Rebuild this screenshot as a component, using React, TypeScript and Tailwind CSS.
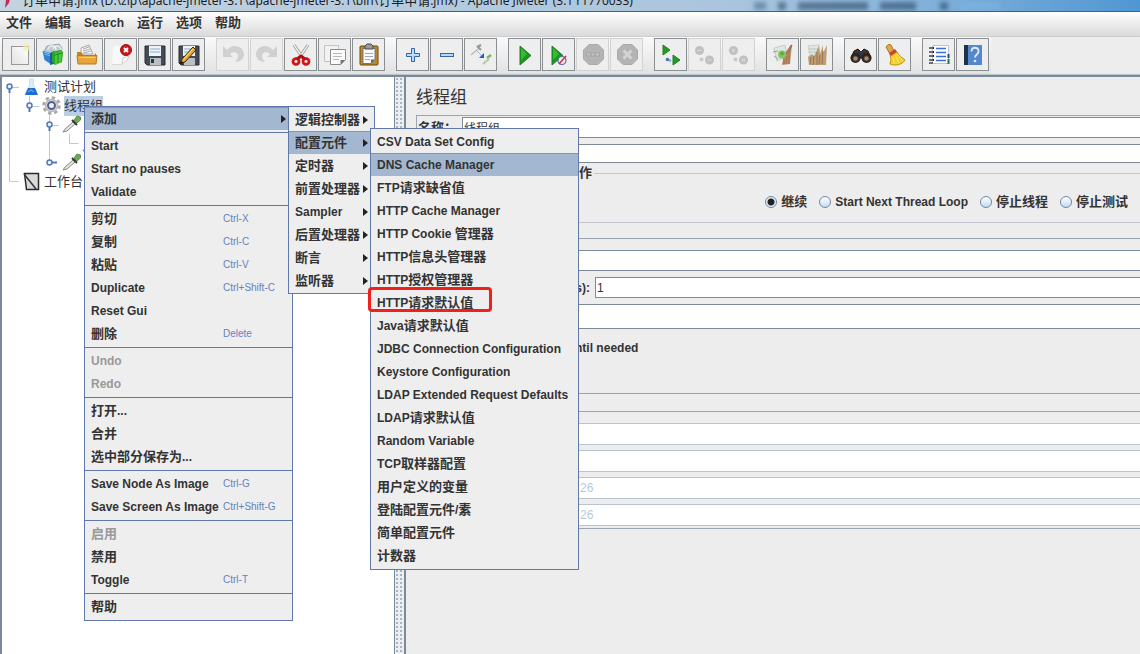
import { useState } from 'react';
import type { ReactNode } from 'react';

type Guide = 'none' | 'line' | 'elbow' | 'open' | 'open-first' | 'open-last' | 'closed';

interface MenuEntry {
  label: string;
  shortcut?: string;
  submenu?: boolean;
  active?: boolean;
  disabled?: boolean;
}

interface Tool {
  name: string;
  icon: ReactNode;
  disabled?: boolean;
}

const MENU_BAR = ['文件', '编辑', 'Search', '运行', '选项', '帮助'];

const CONTEXT_MENU: MenuEntry[][] = [
  [{ label: '添加', submenu: true, active: true }],
  [{ label: 'Start' }, { label: 'Start no pauses' }, { label: 'Validate' }],
  [
    { label: '剪切', shortcut: 'Ctrl-X' },
    { label: '复制', shortcut: 'Ctrl-C' },
    { label: '粘贴', shortcut: 'Ctrl-V' },
    { label: 'Duplicate', shortcut: 'Ctrl+Shift-C' },
    { label: 'Reset Gui' },
    { label: '删除', shortcut: 'Delete' },
  ],
  [
    { label: 'Undo', disabled: true },
    { label: 'Redo', disabled: true },
  ],
  [{ label: '打开...' }, { label: '合并' }, { label: '选中部分保存为...' }],
  [
    { label: 'Save Node As Image', shortcut: 'Ctrl-G' },
    { label: 'Save Screen As Image', shortcut: 'Ctrl+Shift-G' },
  ],
  [{ label: '启用', disabled: true }, { label: '禁用' }, { label: 'Toggle', shortcut: 'Ctrl-T' }],
  [{ label: '帮助' }],
];

const ADD_MENU: MenuEntry[] = [
  { label: '逻辑控制器', submenu: true },
  { label: '配置元件', submenu: true, active: true },
  { label: '定时器', submenu: true },
  { label: '前置处理器', submenu: true },
  { label: 'Sampler', submenu: true },
  { label: '后置处理器', submenu: true },
  { label: '断言', submenu: true },
  { label: '监听器', submenu: true },
];

const CONFIG_MENU: MenuEntry[] = [
  { label: 'CSV Data Set Config' },
  { label: 'DNS Cache Manager', active: true },
  { label: 'FTP请求缺省值' },
  { label: 'HTTP Cache Manager' },
  { label: 'HTTP Cookie 管理器' },
  { label: 'HTTP信息头管理器' },
  { label: 'HTTP授权管理器' },
  { label: 'HTTP请求默认值' },
  { label: 'Java请求默认值' },
  { label: 'JDBC Connection Configuration' },
  { label: 'Keystore Configuration' },
  { label: 'LDAP Extended Request Defaults' },
  { label: 'LDAP请求默认值' },
  { label: 'Random Variable' },
  { label: 'TCP取样器配置' },
  { label: '用户定义的变量' },
  { label: '登陆配置元件/素' },
  { label: '简单配置元件' },
  { label: '计数器' },
];

const ERROR_ACTIONS = ['继续', 'Start Next Thread Loop', '停止线程', '停止测试'];

// Chinese glyphs are set one pixel larger than Latin ones
function Mixed({ text }: { text: string }) {
  const parts = text.split(/([\u4e00-\u9fff\uff00-\uffef]+)/);
  return (
    <span className="whitespace-pre">
      {parts.map((p, i) => (i % 2 ? <span key={i} className="text-[13px]">{p}</span> : p))}
    </span>
  );
}

function Svg({ children }: { children: ReactNode }) {
  return (
    <svg viewBox="0 0 24 24" className="size-6" fill="none" aria-hidden="true">
      {children}
    </svg>
  );
}

function Octagon({ children }: { children: ReactNode }) {
  return (
    <Svg>
      <path d="M8 1.500h9l5.500 5.500v9L17 21.500H8L2.500 16V7z" fill="#b4b4b4" stroke="#aaaaaa" />
      {children}
    </Svg>
  );
}

function GreyDots({ mark }: { mark: string }) {
  return (
    <Svg>
      <circle cx="6.500" cy="7.500" r="4.500" fill="#c0c0c0" />
      <circle cx="16.500" cy="17" r="4.500" fill="#c0c0c0" />
      <circle cx="8.500" cy="16.500" r="2" fill="#c8c8c8" />
      <path d={mark} stroke="#d8d8d8" strokeWidth="1.200" />
    </Svg>
  );
}

const ICONS = {
  fresh: (
    <Svg>
      <defs>
        <linearGradient id="sheet" x1="0" y1="1" x2="1" y2="0">
          <stop offset="0" stopColor="#e2e2e2" />
          <stop offset="1" stopColor="#fff" />
        </linearGradient>
      </defs>
      <rect x="4.500" y="3.500" width="17" height="18" fill="url(#sheet)" stroke="#989898" />
      <circle cx="19.500" cy="4.500" r="3.500" fill="#f1f0a4" opacity=".7" />
    </Svg>
  ),
  templates: (
    <Svg>
      <path d="M3 8l3-5 12-2 3 4-1 6-8 2z" fill="#b9c9ce" stroke="#869ca3" strokeWidth=".8" />
      <path d="M7 7q0-4 4-4t4 4M12 6q2-4 5-3t3 4" stroke="#eef4f6" strokeWidth="1.300" />
      <path d="M1.500 8l8 2v11l-6-4z" fill="#2f80d6" />
      <path d="M3 9l6 2M3.500 11l6 2" stroke="#76c2f0" />
      <path d="M9 10l4-2v13l-4 1z" fill="#1a5cab" />
      <path d="M11 9l9-2 2 2-1 10-7 3-3-3z" fill="#28a428" />
      <path d="M14 10l7-2-1 11-6 3z" fill="#4bc83c" />
      <path d="M14 12l7-2M17 10v10" stroke="#238b22" />
    </Svg>
  ),
  open: (
    <Svg>
      <path d="M6 11V5l8-3 4 9z" fill="#f8f8f8" stroke="#a7a7a7" />
      <path d="M8 6l6-2M8 8l7-2M8 10l8-2" stroke="#a8a8a8" />
      <path d="M2 9h4l2 3h11l2-2v10H3z" fill="#c3801e" />
      <path d="M2 12.500h20l-1 8.500H3z" fill="#e5a53b" stroke="#b97a1b" />
      <path d="M4 14.500h16" stroke="#f4cc7c" />
    </Svg>
  ),
  close: (
    <Svg>
      <path d="M4 3h14v12l-5 6H3z" fill="#f8f8f8" />
      <path d="M3 21.500h10" stroke="#d8d8d8" />
      <path d="M13 21l1-6 6-2q-1 5-7 8z" fill="#fff" stroke="#c2c2c2" strokeWidth=".8" />
      <circle cx="17" cy="7" r="5.500" fill="#c7191b" stroke="#9b1616" />
      <path d="M15 5l4 4M19 5l-4 4" stroke="#fff" strokeWidth="1.800" />
    </Svg>
  ),
  save: (
    <Svg>
      <path d="M2 3h20v19H4l-2-2z" fill="#454b54" stroke="#282c33" />
      <rect x="6" y="3" width="12" height="10" fill="#eef5fa" />
      <path d="M7 6h10M7 9h10" stroke="#84aecb" />
      <rect x="7" y="15" width="11" height="7" fill="#b9bfc6" />
      <rect x="8" y="16" width="3" height="4" fill="#30353c" />
    </Svg>
  ),
  saveAs: (
    <Svg>
      <path d="M2 3h20v19H4l-2-2z" fill="#454b54" stroke="#282c33" />
      <rect x="6" y="3" width="12" height="10" fill="#eef5fa" />
      <path d="M7 6h10M7 9h10" stroke="#84aecb" />
      <rect x="7" y="15" width="11" height="7" fill="#b9bfc6" />
      <path d="M16 4l3 3L8 19l-5 2 2-5z" fill="#e6a62b" stroke="#3c2a10" />
      <path d="M3 21l1.500-3 2 1.500z" fill="#111" />
      <path d="M6.500 16.500L16 6" stroke="#ffe08a" />
    </Svg>
  ),
  undo: (
    <Svg>
      <path d="M2 3v11h10l-3-3c3-3 8-2 8 2 0 2-1 4-3 6 5 0 9-3 9-8C22 3 12 0 6 7z" fill="#d0d0d0" />
    </Svg>
  ),
  redo: (
    <Svg>
      <path d="M22 3v11H12l3-3c-3-3-8-2-8 2 0 2 1 4 3 6-5 0-9-3-9-8C2 3 12 0 18 7z" fill="#d0d0d0" />
    </Svg>
  ),
  cut: (
    <Svg>
      <path d="M5 2l9 13M19 2l-9 13" stroke="#8f8f8f" strokeWidth="3" />
      <path d="M5 2l9 13M19 2l-9 13" stroke="#f1f1f1" strokeWidth="1.400" />
      <ellipse cx="7" cy="18.500" rx="3" ry="2.800" stroke="#d31414" strokeWidth="2.800" />
      <ellipse cx="17" cy="18.500" rx="3" ry="2.800" stroke="#d31414" strokeWidth="2.800" />
      <path d="M8 16l4-3 4 3" stroke="#b80e0e" strokeWidth="3" />
    </Svg>
  ),
  copy: (
    <Svg>
      <path d="M1.500 2.500h14v16h-14z" fill="#f2f2f2" stroke="#c4c4c4" />
      <path d="M7.500 6.500h15v10l-5 5h-10z" fill="#fbfbfb" stroke="#8c8c8c" />
      <path d="M10 10.500h9M10 13.500h9M10 16.500h6" stroke="#bababa" />
      <path d="M17.500 22v-5h5z" fill="#777" />
    </Svg>
  ),
  paste: (
    <Svg>
      <rect x="3" y="3" width="18" height="19" rx="1" fill="#b98a2c" stroke="#704908" />
      <path d="M6 5.500h12v11l-4 4H6z" fill="#fbfbfb" stroke="#777" />
      <path d="M8 10.500h8M8 13.500h8M8 16.500h5" stroke="#9cabb8" />
      <path d="M8 6V3l2-2h4l2 2v3z" fill="#9a9a9a" stroke="#484848" />
      <path d="M14 20.500v-4h4z" fill="#666" />
    </Svg>
  ),
  plus: (
    <Svg>
      <path d="M10.500 5.500h3v5h5v3h-5v5h-3v-5h-5v-3h5z" fill="#bdd9f6" stroke="#2e66a8" />
    </Svg>
  ),
  minus: (
    <Svg>
      <rect x="5.500" y="10.500" width="13" height="3" fill="#bdd9f6" stroke="#2e66a8" />
    </Svg>
  ),
  toggle: (
    <Svg>
      <path d="M2 12l7-6" stroke="#b9bdb9" strokeWidth="1.500" />
      <path d="M8 4l4-2M8 3l4 4" stroke="#8f9b8c" strokeWidth="2" />
      <path d="M14 21l6-5" stroke="#b3c8a7" strokeWidth="2" />
      <path d="M18 15l4-3" stroke="#7eb25d" strokeWidth="2.500" />
      <path d="M8 8l5 5" stroke="#9db6e2" />
      <path d="M10 15h5v-5z" fill="#2b55d5" />
    </Svg>
  ),
  start: (
    <Svg>
      <path d="M7 3v19l11-9.500z" fill="#169a18" stroke="#2a7a2c" />
      <path d="M8 5v12l6-6z" fill="#35bb34" />
    </Svg>
  ),
  startNoTimers: (
    <Svg>
      <path d="M5 3v19l11-9.500z" fill="#169a18" stroke="#2a7a2c" />
      <path d="M6 5v12l6-6z" fill="#35bb34" />
      <circle cx="15" cy="17.500" r="4" fill="#eee8ee" stroke="#566b9b" strokeWidth="1.200" />
      <path d="M12 21l7-8" stroke="#c63345" strokeWidth="1.500" />
    </Svg>
  ),
  stop: (
    <Octagon>
      <path d="M5 9.500h14v4H5z" fill="#a6a6a6" />
      <path d="M6 11.500h3M10.500 11.500h3M15 11.500h3" stroke="#c4c4c4" strokeWidth="2" />
    </Octagon>
  ),
  shutdown: (
    <Octagon>
      <path d="M8.500 7.500l8 8M16.500 7.500l-8 8" stroke="#d4d4d4" strokeWidth="3" />
    </Octagon>
  ),
  remoteStart: (
    <Svg>
      <path d="M4 2v10l7-5z" fill="#209e22" stroke="#2a7a2c" />
      <path d="M14 12v10l7-5z" fill="#209e22" stroke="#2a7a2c" />
      <circle cx="8.500" cy="16.500" r="1.800" fill="#4572b8" />
      <path d="M10 17l2 1" stroke="#7ea0d0" strokeWidth="2" />
    </Svg>
  ),
  remoteStop: <GreyDots mark="M4 7.500h5M14 17h5" />,
  remoteShutdown: <GreyDots mark="M5 6l3 3M8 6L5 9M15 15.500l3 3M18 15.500l-3 3" />,
  clear: (
    <Svg>
      <path d="M3 5l11-3 2 11-10 5z" fill="#e0e6e0" stroke="#c3ccc3" />
      <path d="M2 9l5-1M3 13l4 3" stroke="#8ca890" />
      <path d="M13 11l8-10-2 20-8 1z" fill="#b98d6a" />
      <path d="M14 13l6-11M17 12l4-10" stroke="#96704e" />
      <circle cx="11" cy="11.500" r="4" fill="#8ac46a" />
      <circle cx="11" cy="10.500" r="2" fill="#5fae35" />
      <path d="M13 15v6M16 13l-1 8M18 12v9" stroke="#9d7150" />
    </Svg>
  ),
  clearAll: (
    <Svg>
      <path d="M3 3l11-1 1 11-9 5z" fill="#e1e9e4" stroke="#c6d0c8" />
      <path d="M4 6h9M4 9h8" stroke="#b3c3b8" />
      <path d="M3 14l4-3 2 2 5-10 1 8 3-9v8l4-8-1 20H4z" fill="#bd9c76" />
      <path d="M6 14l-1 7M9 13l-1 9M12 9v13M15 12l-1 9M18 8l-1 13" stroke="#987550" />
    </Svg>
  ),
  search: (
    <Svg>
      <path d="M5 8l4-2 3 3 3-3 4 2 3 7H2z" fill="#3f3229" stroke="#1d1714" />
      <path d="M10 8h4v6h-4z" fill="#25384c" />
      <circle cx="6.500" cy="15" r="5" fill="#2a221d" />
      <circle cx="17.500" cy="15" r="5" fill="#2a221d" />
      <circle cx="6.500" cy="15.500" r="2.500" fill="#a58a76" stroke="#5a463a" />
      <circle cx="17.500" cy="15.500" r="2.500" fill="#a58a76" stroke="#5a463a" />
    </Svg>
  ),
  broom: (
    <Svg>
      <path d="M3 4q2-4 5-2l3 6-4 3z" fill="#e0a849" stroke="#a97320" />
      <path d="M7 11l6-3q4 6 9 9-3 5-10 5-3 0-5-1 2-4 0-10z" fill="#f3d02e" stroke="#c4940f" />
      <path d="M6 10l6-4 2 3-6 4z" fill="#c9462b" />
      <path d="M10 14l1 7M12 12l4 8M14 11l6 7" stroke="#fbe97a" />
    </Svg>
  ),
  functions: (
    <Svg>
      <path d="M5.500 2.500h16v18h-16z" fill="#fbfdff" stroke="#b9c6cf" />
      <path d="M9 5.500h10M9 9.500h10M9 13.500h10M9 17.500h10" stroke="#3c6fd0" strokeWidth="1.400" />
      <path d="M2 5h4M2 9h4M2 13h4M2 17h4M2 20h4" stroke="#444" strokeWidth="1.400" />
      <path d="M6.500 4v2M6.500 8v2M6.500 12v2M6.500 16v2" stroke="#222" />
      <path d="M21.500 11v4" stroke="#274a88" strokeWidth="2" />
      <path d="M21.500 16v5" stroke="#267838" strokeWidth="2" />
    </Svg>
  ),
  help: (
    <Svg>
      <path d="M3 2h18v20H3z" fill="#5388cc" />
      <path d="M3 2h4v20H3z" fill="#20304a" />
      <path d="M10.500 8.500c0-5 7-5 7 0 0 3-3.500 3-3.500 6" stroke="#dfeafa" strokeWidth="1.800" />
      <circle cx="14" cy="18" r="1.300" fill="#dfeafa" />
    </Svg>
  ),
};

const TOOLS: Tool[][] = [
  [
    { name: 'New', icon: ICONS.fresh },
    { name: 'Templates', icon: ICONS.templates },
    { name: 'Open', icon: ICONS.open },
    { name: 'Close', icon: ICONS.close },
    { name: 'Save', icon: ICONS.save },
    { name: 'Save as', icon: ICONS.saveAs },
  ],
  [
    { name: 'Undo', icon: ICONS.undo, disabled: true },
    { name: 'Redo', icon: ICONS.redo, disabled: true },
    { name: 'Cut', icon: ICONS.cut },
    { name: 'Copy', icon: ICONS.copy },
    { name: 'Paste', icon: ICONS.paste },
  ],
  [
    { name: 'Expand all', icon: ICONS.plus },
    { name: 'Collapse all', icon: ICONS.minus },
    { name: 'Toggle', icon: ICONS.toggle },
  ],
  [
    { name: 'Start', icon: ICONS.start },
    { name: 'Start no pauses', icon: ICONS.startNoTimers },
    { name: 'Stop', icon: ICONS.stop, disabled: true },
    { name: 'Shutdown', icon: ICONS.shutdown, disabled: true },
  ],
  [
    { name: 'Remote start all', icon: ICONS.remoteStart },
    { name: 'Remote stop all', icon: ICONS.remoteStop, disabled: true },
    { name: 'Remote shutdown all', icon: ICONS.remoteShutdown, disabled: true },
  ],
  [
    { name: 'Clear', icon: ICONS.clear },
    { name: 'Clear all', icon: ICONS.clearAll },
  ],
  [
    { name: 'Search', icon: ICONS.search },
    { name: 'Reset search', icon: ICONS.broom },
  ],
  [
    { name: 'Function helper', icon: ICONS.functions },
    { name: 'Help', icon: ICONS.help },
  ],
];

function MenuItem({ entry }: { entry: MenuEntry }) {
  const color = entry.disabled ? 'text-[#999999]' : 'text-[#333333]';
  const bg = entry.active ? 'bg-[#a3b8d0] border-[#7f95b5]' : 'border-transparent';
  return (
    <button
      type="button"
      role="menuitem"
      disabled={entry.disabled}
      className={`flex h-[23px] w-full items-center border-t px-1.5 text-left font-bold ${color} ${bg}`}
    >
      <span className="flex-1">
        <Mixed text={entry.label} />
      </span>
      {entry.shortcut && (
        <span className="w-[67px] shrink-0 whitespace-nowrap pl-1 text-[10px] font-normal text-[#6382bf]">
          {entry.shortcut}
        </span>
      )}
      {entry.submenu && (
        <svg viewBox="0 0 5 8" className="h-2 w-[5px]" aria-hidden="true">
          <path d="M0 0l5 4-5 4z" fill="#222" />
        </svg>
      )}
    </button>
  );
}

function TreeGuide({ type }: { type: Guide }) {
  const open = type.startsWith('open');
  return (
    <svg viewBox="0 0 20 19" className="h-[19px] w-5 shrink-0" fill="none" aria-hidden="true">
      {(type === 'line' || type === 'open') && <path d="M7.500 0v19" stroke="#b4c8e0" />}
      {type === 'elbow' && <path d="M7.500 0v9.500h9" stroke="#c3c8d0" />}
      {(type === 'open-last' || type === 'closed') && <path d="M7.500 0v8" stroke="#b4c8e0" />}
      {type === 'open-first' && <path d="M7.500 12v7" stroke="#b4c8e0" />}
      {open && <path d="M10 10.500h7" stroke="#b4c8e0" />}
      {open && <path d="M7.500 12v4" stroke="#5679b0" strokeWidth="2" />}
      {type === 'closed' && <path d="M10 9.500h5" stroke="#5679b0" strokeWidth="2" />}
      {(open || type === 'closed') && (
        <circle cx="7.500" cy="9.500" r="2.500" fill="#e8f2ff" stroke="#5679b0" strokeWidth="1.500" />
      )}
    </svg>
  );
}

function TreeIcon({ children }: { children: ReactNode }) {
  return (
    <svg viewBox="0 0 20 19" className="h-[19px] w-5 shrink-0" fill="none" aria-hidden="true">
      {children}
    </svg>
  );
}

const FLASK = (
  <TreeIcon>
    <path d="M7.500 2v6L3 17h12L11.500 8V2z" fill="#dcecf9" stroke="#c4d4e4" strokeWidth=".7" />
    <path d="M6 11h7l3 7H3z" fill="#1c6ed0" />
    <path d="M6 15l3-2 3 2" stroke="#5aa4ea" strokeWidth="1.500" />
  </TreeIcon>
);

const GEAR = (
  <TreeIcon>
    <circle cx="9.500" cy="9.500" r="8" stroke="#a6a6a6" strokeWidth="2.500" strokeDasharray="3.400 2.883" />
    <circle cx="9.500" cy="9.500" r="6" fill="#e6e6e8" stroke="#b4b4b6" strokeWidth="1.500" />
    <circle cx="9.500" cy="9.500" r="3.500" fill="#e9f0fa" stroke="#50608c" strokeWidth="2" />
  </TreeIcon>
);

const DROPPER = (
  <TreeIcon>
    <path d="M1 17l2-3 8-7 2 2-8 7z" fill="#e2e4e2" stroke="#70716f" strokeWidth=".8" />
    <path d="M10 5l5 5" stroke="#303330" strokeWidth="2" />
    <path d="M12 5l3-4 3.500 1v3L15 8z" fill="#6fa85c" stroke="#4c8040" strokeWidth=".8" />
  </TreeIcon>
);

const WORKBENCH = (
  <TreeIcon>
    <path d="M2.500 1.500h14v16h-12z" fill="#dadada" stroke="#2a2a2a" strokeWidth="1.500" />
    <path d="M2 2l12 15" stroke="#333" strokeWidth="1.500" />
  </TreeIcon>
);

interface TreeRowProps {
  guides: Guide[];
  icon: ReactNode;
  label: string;
  selected?: boolean;
}

function TreeRow({ guides, icon, label, selected }: TreeRowProps) {
  return (
    <li className="flex h-[19px] items-center">
      {guides.map((g, i) => (
        <TreeGuide key={i} type={g} />
      ))}
      {icon}
      <span className={`ml-0.5 whitespace-nowrap leading-[19px] ${selected ? 'bg-[#b8cfe5]' : ''}`}>
        <Mixed text={label} />
      </span>
    </li>
  );
}

interface FieldProps {
  id: string;
  label: string;
  value: string;
  labelWidth: string;
  height?: string;
  disabled?: boolean;
}

function Field({ id, label, value, labelWidth, height = 'h-[21px]', disabled }: FieldProps) {
  return (
    <div className={`flex items-center ${height}`}>
      <label htmlFor={id} className={`shrink-0 pl-px font-bold ${labelWidth} ${disabled ? 'text-[#999999]' : ''}`}>
        <Mixed text={label} />
      </label>
      <input
        id={id}
        defaultValue={value}
        disabled={disabled}
        className={`h-full min-w-0 flex-1 border border-r-0 bg-white px-px ${
          disabled ? 'border-[#b9c4d0] text-[#b8c8dc]' : 'border-[#7a8a99]'
        }`}
      />
    </div>
  );
}

function Group({ title, className, children }: { title: string; className: string; children: ReactNode }) {
  return (
    <fieldset className={`min-w-0 border border-r-0 ${className}`}>
      <legend className="ml-1 h-[18px] px-0.5 font-bold leading-[18px]">
        <Mixed text={title} />
      </legend>
      {children}
    </fieldset>
  );
}

function ThreadGroupPanel() {
  const [action, setAction] = useState('继续');

  return (
    <section className="min-w-0 flex-1 border-l-2 border-[#7a8a99] bg-[#ededed] pl-2.5">
      <h1 className="flex h-[38px] items-center pt-1 text-[17px]">线程组</h1>
      <div className="border-l border-t border-[#9aa5af] pt-px">
        <Field id="name" label="名称：" value="线程组" labelWidth="w-[45px]" />
      </div>
      <div className="mt-1.5">
        <Field id="comments" label="注释：" value="" labelWidth="w-[46px]" height="h-[19px]" />
      </div>

      <Group title="在取样器错误后要执行的动作" className="mt-px border-[#c0c6cc]">
        <div className="flex h-10 items-center justify-end gap-3 pr-3">
          {ERROR_ACTIONS.map(a => (
            <label key={a} className="flex items-center gap-1 font-bold">
              <input
                type="radio"
                name="error-action"
                checked={action === a}
                onChange={() => setAction(a)}
                className="size-3 appearance-none rounded-full border border-[#6d87a6] bg-linear-to-b from-white to-[#c5dcf0] checked:bg-[radial-gradient(circle,#222_0_3px,#e6eff8_4px)]"
              />
              <Mixed text={a} />
            </label>
          ))}
        </div>
      </Group>

      <Group title="线程属性" className="mt-1.5 border-[#9aa5af] pb-3.5">
        <div className="flex flex-col gap-1.5 pt-[3px]">
          <Field id="threads" label="线程数：" value="1" labelWidth="w-[62px]" />
          <Field id="ramp-up" label="Ramp-Up Period (in seconds):" value="1" labelWidth="w-[178px]" />
          <Field id="loops" label="循环次数" value="1" labelWidth="w-[124px]" height="h-[25px]" />
        </div>
        <label className="flex h-[38px] items-center gap-1.5 pl-1 font-bold">
          <input type="checkbox" className="size-3" />
          Delay Thread creation until needed
        </label>
        <label className="flex h-3 items-center gap-1.5 pl-1 font-bold">
          <input type="checkbox" className="size-3" />
          <Mixed text="调度器" />
        </label>
      </Group>

      <Group title="调度器配置" className="mt-2 border-[#9aa5af] pb-0.5">
        <div className="flex flex-col gap-[5px] pt-[3px]">
          <Field id="duration" label="持续时间（秒）" value="" labelWidth="w-[124px]" height="h-[22px]" disabled />
          <Field id="delay" label="启动延迟（秒）" value="" labelWidth="w-[124px]" height="h-[22px]" disabled />
          <Field id="start-time" label="启动时间" value="26" labelWidth="w-[161px]" height="h-[22px]" disabled />
          <Field id="end-time" label="结束时间" value="26" labelWidth="w-[161px]" height="h-[22px]" disabled />
        </div>
      </Group>
    </section>
  );
}

export default function App() {
  return (
    <div className="relative flex h-screen flex-col overflow-hidden bg-[#ededed] font-['Liberation_Sans','Noto_Sans_CJK_SC',sans-serif] text-xs text-[#333333]">
      {/* Window title */}
      <header className="flex h-3 shrink-0 items-end justify-between overflow-hidden border-b border-[#3f627f] bg-linear-to-r from-[#c3d3e0] via-[#a9c5dd] via-65% to-[#4f97d3] pr-[140px]">
        <div className="flex items-center gap-2.5 pb-0.5 pl-1">
          <svg viewBox="0 0 8 14" className="h-3.5 w-2" aria-hidden="true">
            <path d="M7 0L5 9l-4 5 1-8z" fill="#c8265c" />
          </svg>
          <span className="whitespace-nowrap font-['Noto_Sans','Noto_Sans_CJK_SC',sans-serif] text-xs leading-4 text-[#1c1c1c]">
            <Mixed text="订单申请.jmx (D:\zip\apache-jmeter-3.1\apache-jmeter-3.1\bin\订单申请.jmx) - Apache JMeter (3.1 r1770033)" />
          </span>
        </div>
        <div className="flex shrink-0 gap-3 pb-px opacity-60 blur-[2px]" aria-hidden="true">
          <span className="h-2 w-3 bg-[#4b6f92]" />
          <span className="h-2 w-2 bg-[#2d4a66]" />
          <span className="h-2 w-[70px] bg-[#2d4a66]" />
          <span className="h-2 w-9 bg-[#2d4a66]" />
          <span className="ml-3 h-2 w-2 bg-[#2d4a66]" />
          <span className="h-2 w-10 bg-[#7db4e2]" />
        </div>
      </header>

      <nav className="flex h-[25px] shrink-0 items-center gap-[13px] border-b border-[#cdcdcd] bg-linear-to-b from-white to-[#dadada] pb-0.5 pl-1.5 font-bold">
        {MENU_BAR.map(m => (
          <button key={m} type="button">
            <Mixed text={m} />
          </button>
        ))}
      </nav>

      <div className="flex h-[38px] shrink-0 border-b border-[#bcc3c8]">
        <div role="toolbar" className="flex items-start gap-[11px] bg-linear-to-b from-[#fafafa] to-[#e2e2e2] px-0.5 pt-px">
          {TOOLS.map((group, i) => (
            <div key={i} className="flex gap-px">
              {group.map(t => (
                <button
                  key={t.name}
                  type="button"
                  aria-label={t.name}
                  disabled={t.disabled}
                  className={`flex size-[33px] items-center justify-center border bg-[#eeeeee] ${
                    t.disabled ? 'border-[#d2d2d2]' : 'border-[#8a8f94]'
                  }`}
                >
                  {t.icon}
                </button>
              ))}
            </div>
          ))}
        </div>
      </div>

      <main className="flex min-h-0 flex-1 border-t-2 border-[#7a8a99]">
        <div className="w-[395px] shrink-0 border-l-2 border-r border-[#7a8a99] bg-white">
          <ul>
            <TreeRow guides={['open-first']} icon={FLASK} label="测试计划" />
            <TreeRow guides={['line', 'open-last']} icon={GEAR} label="线程组" selected />
            <TreeRow guides={['line', 'none', 'open']} icon={DROPPER} label="" />
            <TreeRow guides={['line', 'none', 'line', 'elbow']} icon={DROPPER} label="" />
            <TreeRow guides={['line', 'none', 'closed']} icon={DROPPER} label="" />
            <TreeRow guides={['elbow']} icon={WORKBENCH} label="工作台" />
          </ul>
        </div>
        <div className="w-[9px] shrink-0 bg-[#eeeeee] bg-[radial-gradient(circle_at_2px_2px,#a4b5cb_1px,transparent_1px)] bg-size-[4px_4px]" />
        <ThreadGroupPanel />
      </main>

      {/* Context menu of the selected node */}
      <div role="menu" className="absolute left-[84px] top-[106px] w-[209px] border border-[#6079a8] bg-[#eeeeee] pb-0.5">
        {CONTEXT_MENU.map((group, i) => (
          <div key={i}>
            {i > 0 && <div className="h-1 pt-0.5"><div className="h-px bg-[#6079a8]" /></div>}
            {group.map(e => (
              <MenuItem key={e.label} entry={e} />
            ))}
          </div>
        ))}
      </div>

      <div role="menu" className="absolute left-[288px] top-[106px] w-[87px] border border-[#6079a8] bg-[#eeeeee] py-px">
        {ADD_MENU.map(e => (
          <MenuItem key={e.label} entry={e} />
        ))}
      </div>

      <div role="menu" className="absolute left-[370px] top-[128px] w-[209px] border border-[#6079a8] bg-[#eeeeee] pb-0.5 pt-px">
        {CONFIG_MENU.map(e => (
          <MenuItem key={e.label} entry={e} />
        ))}
      </div>

      {/* Red marker around the HTTP defaults entry */}
      <div className="pointer-events-none absolute left-[368px] top-[287px] h-[25px] w-[124px] rounded-sm border-[3px] border-[#f0201c]" />
    </div>
  );
}
